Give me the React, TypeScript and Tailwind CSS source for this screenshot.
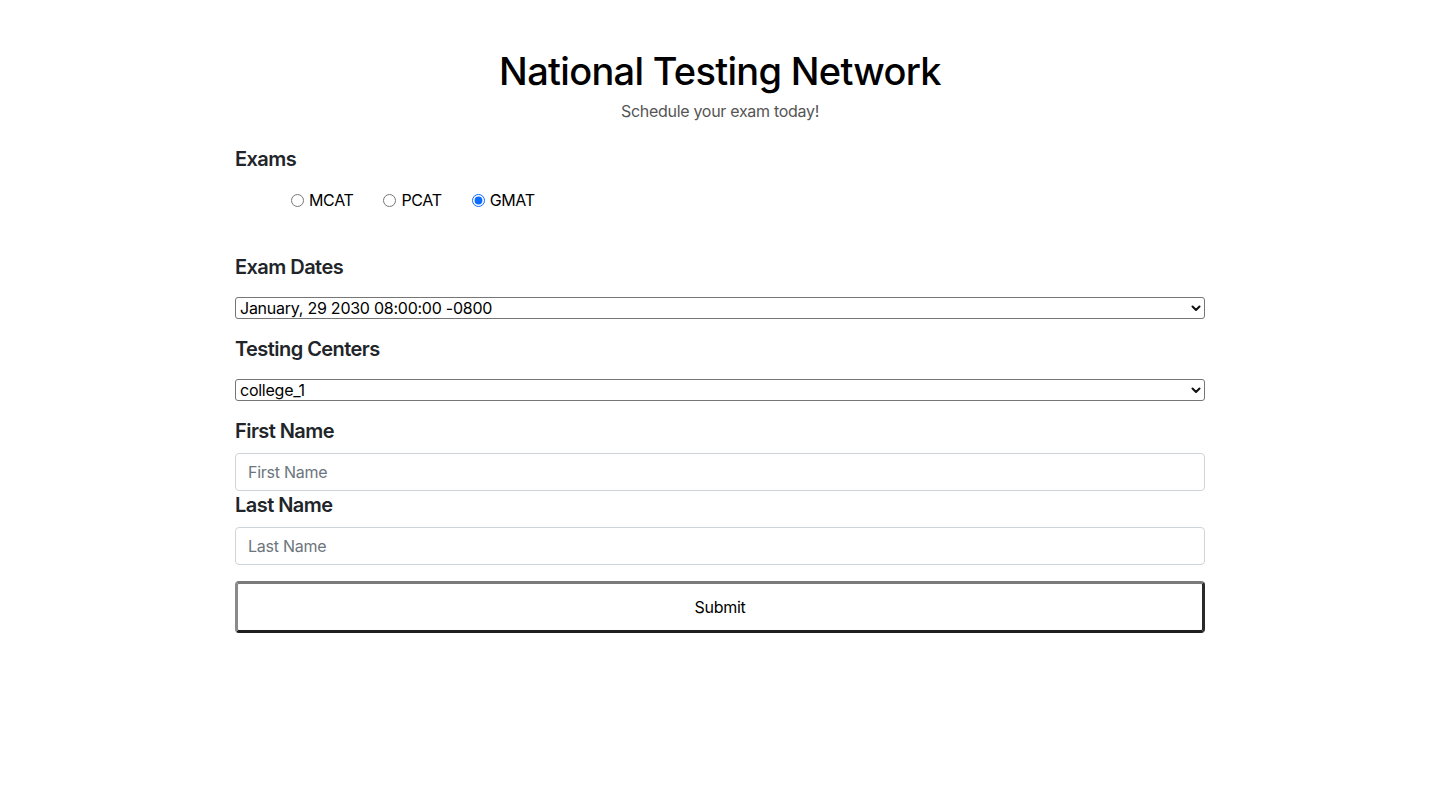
import { useState } from "react";

const exams = ["MCAT", "PCAT", "GMAT"];

function Chevron() {
  return (
    <svg
      className="pointer-events-none absolute right-[4px] top-1/2 h-[10px] w-[10px] -translate-y-1/2"
      viewBox="0 0 10 10"
      fill="none"
    >
      <path d="M1.5 3.5 L5 7 L8.5 3.5" stroke="#111" strokeWidth="2" strokeLinecap="round" strokeLinejoin="round" />
    </svg>
  );
}

function Select({ options }: { options: string[] }) {
  return (
    <div className="relative">
      <select className="block h-[22px] w-full appearance-none rounded-[3px] border border-[#767676] bg-white pl-[4px] pr-6 text-[16px] leading-[20px] tracking-[-0.25px] text-black outline-none">
        {options.map((o) => (
          <option key={o}>{o}</option>
        ))}
      </select>
      <Chevron />
    </div>
  );
}

function Label({ children, className = "" }: { children: React.ReactNode; className?: string }) {
  return (
    <h5 className={`text-[20px] font-semibold leading-[24px] tracking-[-0.55px] text-[#212529] ${className}`}>
      {children}
    </h5>
  );
}

export default function App() {
  const [exam, setExam] = useState("GMAT");

  return (
    <div className="min-h-screen bg-white font-['Inter','Helvetica_Neue',Arial,sans-serif] text-[#212529]">
      <div className="mx-auto w-[970px] pt-[47px]">
        <h1 className="text-center text-[38px] font-medium leading-[48px] tracking-[-0.7px] text-black">
          National Testing Network
        </h1>
        <p className="mt-[4px] text-center text-[16px] leading-[24px] tracking-[-0.3px] text-[#555]">
          Schedule your exam today!
        </p>

        <Label className="mt-[24px]">Exams</Label>
        <div className="mt-[17px] flex items-center pl-[56px] text-[16px] leading-[24px] tracking-[-0.35px] text-black">
          {exams.map((e) => (
            <label key={e} className="mr-[30px] flex items-center">
              <input
                type="radio"
                name="exam"
                checked={exam === e}
                onChange={() => setExam(e)}
                className="m-0 mr-[5px] h-[13px] w-[13px] accent-[#0b6cff]"
              />
              {e}
            </label>
          ))}
        </div>

        <Label className="mt-[43px]">Exam Dates</Label>
        <div className="mt-[18px]">
          <Select options={["January, 29 2030 08:00:00 -0800"]} />
        </div>

        <Label className="mt-[18px]">Testing Centers</Label>
        <div className="mt-[18px]">
          <Select options={["college_1"]} />
        </div>

        <Label className="mt-[18px]">First Name</Label>
        <input
          placeholder="First Name"
          className="mt-[10px] block h-[38px] w-full rounded-[4px] border border-[#ced4da] px-[12px] text-[16px] tracking-[-0.25px] text-[#212529] outline-none placeholder:text-[#6c757d]"
        />
        <Label className="mt-[2px]">Last Name</Label>
        <input
          placeholder="Last Name"
          className="mt-[10px] block h-[38px] w-full rounded-[4px] border border-[#ced4da] px-[12px] text-[16px] tracking-[-0.25px] text-[#212529] outline-none placeholder:text-[#6c757d]"
        />

        <button
          type="button"
          className="mt-[16px] block h-[52px] w-full rounded-[4px] border-[3px] border-t-[#7a7a7a] border-l-[#8a8a8a] border-b-[#1f1f1f] border-r-[#2a2a2a] bg-white text-[16px] tracking-[-0.25px] text-black"
        >
          Submit
        </button>
      </div>
    </div>
  );
}
